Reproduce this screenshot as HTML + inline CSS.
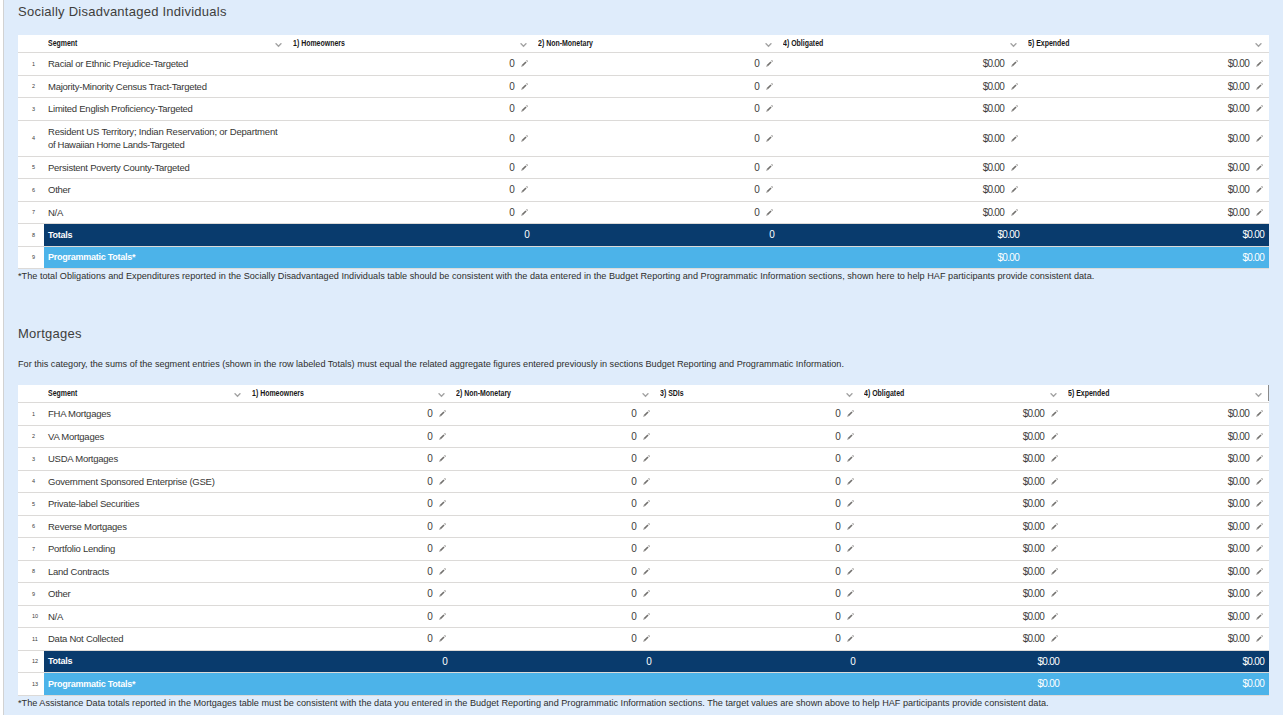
<!DOCTYPE html>
<html><head><meta charset="utf-8"><style>
html,body{margin:0;padding:0;width:1283px;height:715px;overflow:hidden;background:#fff;font-family:"Liberation Sans",sans-serif;}
.panel{position:absolute;left:3px;top:0;width:1280px;height:715px;background:#dfecfb;border-left:1px solid #d2d2d2;box-sizing:border-box}
.tb{position:absolute;background:#fff}
.ln{position:absolute;height:1px;background:#dcdad8}
.hd{position:absolute;font-weight:bold;font-size:8.3px;letter-spacing:0px;color:#181818;white-space:nowrap;transform:scaleX(0.84);transform-origin:0 0}
.cvw,.pw{position:absolute;line-height:0}
.cv,.pc{display:block}
.rn{position:absolute;font-size:5.5px;color:#3a3a3a;white-space:nowrap}
.tx{position:absolute;font-size:9.5px;letter-spacing:-0.25px;color:#363634;white-space:nowrap}
.tx2{position:absolute;font-size:9.5px;letter-spacing:-0.3px;color:#363634;white-space:nowrap;line-height:13px;padding-top:4px;box-sizing:border-box}
.vl{position:absolute;font-size:10px;letter-spacing:-0.75px;color:#3e3e3c;white-space:nowrap}
.tt{position:absolute;font-size:9px;font-weight:bold;letter-spacing:-0.25px;color:#fff;white-space:nowrap}
.tv{position:absolute;font-size:10px;letter-spacing:-0.7px;color:#fff;white-space:nowrap}
.pv{position:absolute;font-size:10px;letter-spacing:-0.7px;color:#fff;white-space:nowrap}
.ttl{position:absolute;font-size:13px;letter-spacing:0.25px;color:#3e3e3c;white-space:nowrap}
.note{position:absolute;font-size:9.15px;color:#2e2e2c;white-space:nowrap}
</style></head><body>
<div class="panel"></div>

<div class="ttl" style="left:18px;top:4px">Socially Disadvantaged Individuals</div>
<div class="tb" style="left:18px;top:35px;width:1251px;height:233px"></div>
<div class="ln" style="left:18px;top:52px;width:1251px"></div>
<div class="hd" style="left:48px;top:35px;height:17px;line-height:17px">Segment</div>
<div class="cvw" style="left:275px;top:43px"><svg class="cv" width="7" height="5" viewBox="0 0 7 5"><path d="M0.6 0.3 L3.5 3.2 L6.4 0.3" fill="none" stroke="#a2a2a2" stroke-width="1.35"/></svg></div>
<div class="hd" style="left:293px;top:35px;height:17px;line-height:17px">1) Homeowners</div>
<div class="cvw" style="left:520px;top:43px"><svg class="cv" width="7" height="5" viewBox="0 0 7 5"><path d="M0.6 0.3 L3.5 3.2 L6.4 0.3" fill="none" stroke="#a2a2a2" stroke-width="1.35"/></svg></div>
<div class="hd" style="left:538px;top:35px;height:17px;line-height:17px">2) Non-Monetary</div>
<div class="cvw" style="left:765px;top:43px"><svg class="cv" width="7" height="5" viewBox="0 0 7 5"><path d="M0.6 0.3 L3.5 3.2 L6.4 0.3" fill="none" stroke="#a2a2a2" stroke-width="1.35"/></svg></div>
<div class="hd" style="left:783px;top:35px;height:17px;line-height:17px">4) Obligated</div>
<div class="cvw" style="left:1010px;top:43px"><svg class="cv" width="7" height="5" viewBox="0 0 7 5"><path d="M0.6 0.3 L3.5 3.2 L6.4 0.3" fill="none" stroke="#a2a2a2" stroke-width="1.35"/></svg></div>
<div class="hd" style="left:1028px;top:35px;height:17px;line-height:17px">5) Expended</div>
<div class="cvw" style="left:1255px;top:43px"><svg class="cv" width="7" height="5" viewBox="0 0 7 5"><path d="M0.6 0.3 L3.5 3.2 L6.4 0.3" fill="none" stroke="#a2a2a2" stroke-width="1.35"/></svg></div>
<div class="ln" style="left:18px;top:75px;width:1251px"></div>
<div class="rn" style="left:32px;top:53px;height:22px;line-height:22px">1</div>
<div class="tx" style="left:48px;top:53px;height:22px;line-height:22px">Racial or Ethnic Prejudice-Targeted</div>
<div class="vl" style="right:769px;top:53px;height:22px;line-height:22px">0</div>
<div class="pw" style="left:521px;top:60px"><svg class="pc" width="7" height="7" viewBox="0 0 7 7"><path d="M0.1 6.9 L0.75 5.1 L1.9 6.25 Z" fill="#a3a19f"/><path d="M0.75 5.1 L4.45 1.4 L5.6 2.55 L1.9 6.25 Z" fill="#72706e"/><path d="M5.05 0.8 L5.9 -0.05 L7.05 1.1 L6.2 1.95 Z" fill="#9c9a98"/></svg></div>
<div class="vl" style="right:524px;top:53px;height:22px;line-height:22px">0</div>
<div class="pw" style="left:766px;top:60px"><svg class="pc" width="7" height="7" viewBox="0 0 7 7"><path d="M0.1 6.9 L0.75 5.1 L1.9 6.25 Z" fill="#a3a19f"/><path d="M0.75 5.1 L4.45 1.4 L5.6 2.55 L1.9 6.25 Z" fill="#72706e"/><path d="M5.05 0.8 L5.9 -0.05 L7.05 1.1 L6.2 1.95 Z" fill="#9c9a98"/></svg></div>
<div class="vl" style="right:279px;top:53px;height:22px;line-height:22px">$0.00</div>
<div class="pw" style="left:1011px;top:60px"><svg class="pc" width="7" height="7" viewBox="0 0 7 7"><path d="M0.1 6.9 L0.75 5.1 L1.9 6.25 Z" fill="#a3a19f"/><path d="M0.75 5.1 L4.45 1.4 L5.6 2.55 L1.9 6.25 Z" fill="#72706e"/><path d="M5.05 0.8 L5.9 -0.05 L7.05 1.1 L6.2 1.95 Z" fill="#9c9a98"/></svg></div>
<div class="vl" style="right:34px;top:53px;height:22px;line-height:22px">$0.00</div>
<div class="pw" style="left:1256px;top:60px"><svg class="pc" width="7" height="7" viewBox="0 0 7 7"><path d="M0.1 6.9 L0.75 5.1 L1.9 6.25 Z" fill="#a3a19f"/><path d="M0.75 5.1 L4.45 1.4 L5.6 2.55 L1.9 6.25 Z" fill="#72706e"/><path d="M5.05 0.8 L5.9 -0.05 L7.05 1.1 L6.2 1.95 Z" fill="#9c9a98"/></svg></div>
<div class="ln" style="left:18px;top:97px;width:1251px"></div>
<div class="rn" style="left:32px;top:76px;height:21px;line-height:21px">2</div>
<div class="tx" style="left:48px;top:76px;height:21px;line-height:21px">Majority-Minority Census Tract-Targeted</div>
<div class="vl" style="right:769px;top:76px;height:21px;line-height:21px">0</div>
<div class="pw" style="left:521px;top:83px"><svg class="pc" width="7" height="7" viewBox="0 0 7 7"><path d="M0.1 6.9 L0.75 5.1 L1.9 6.25 Z" fill="#a3a19f"/><path d="M0.75 5.1 L4.45 1.4 L5.6 2.55 L1.9 6.25 Z" fill="#72706e"/><path d="M5.05 0.8 L5.9 -0.05 L7.05 1.1 L6.2 1.95 Z" fill="#9c9a98"/></svg></div>
<div class="vl" style="right:524px;top:76px;height:21px;line-height:21px">0</div>
<div class="pw" style="left:766px;top:83px"><svg class="pc" width="7" height="7" viewBox="0 0 7 7"><path d="M0.1 6.9 L0.75 5.1 L1.9 6.25 Z" fill="#a3a19f"/><path d="M0.75 5.1 L4.45 1.4 L5.6 2.55 L1.9 6.25 Z" fill="#72706e"/><path d="M5.05 0.8 L5.9 -0.05 L7.05 1.1 L6.2 1.95 Z" fill="#9c9a98"/></svg></div>
<div class="vl" style="right:279px;top:76px;height:21px;line-height:21px">$0.00</div>
<div class="pw" style="left:1011px;top:83px"><svg class="pc" width="7" height="7" viewBox="0 0 7 7"><path d="M0.1 6.9 L0.75 5.1 L1.9 6.25 Z" fill="#a3a19f"/><path d="M0.75 5.1 L4.45 1.4 L5.6 2.55 L1.9 6.25 Z" fill="#72706e"/><path d="M5.05 0.8 L5.9 -0.05 L7.05 1.1 L6.2 1.95 Z" fill="#9c9a98"/></svg></div>
<div class="vl" style="right:34px;top:76px;height:21px;line-height:21px">$0.00</div>
<div class="pw" style="left:1256px;top:83px"><svg class="pc" width="7" height="7" viewBox="0 0 7 7"><path d="M0.1 6.9 L0.75 5.1 L1.9 6.25 Z" fill="#a3a19f"/><path d="M0.75 5.1 L4.45 1.4 L5.6 2.55 L1.9 6.25 Z" fill="#72706e"/><path d="M5.05 0.8 L5.9 -0.05 L7.05 1.1 L6.2 1.95 Z" fill="#9c9a98"/></svg></div>
<div class="ln" style="left:18px;top:120px;width:1251px"></div>
<div class="rn" style="left:32px;top:98px;height:22px;line-height:22px">3</div>
<div class="tx" style="left:48px;top:98px;height:22px;line-height:22px">Limited English Proficiency-Targeted</div>
<div class="vl" style="right:769px;top:98px;height:22px;line-height:22px">0</div>
<div class="pw" style="left:521px;top:105px"><svg class="pc" width="7" height="7" viewBox="0 0 7 7"><path d="M0.1 6.9 L0.75 5.1 L1.9 6.25 Z" fill="#a3a19f"/><path d="M0.75 5.1 L4.45 1.4 L5.6 2.55 L1.9 6.25 Z" fill="#72706e"/><path d="M5.05 0.8 L5.9 -0.05 L7.05 1.1 L6.2 1.95 Z" fill="#9c9a98"/></svg></div>
<div class="vl" style="right:524px;top:98px;height:22px;line-height:22px">0</div>
<div class="pw" style="left:766px;top:105px"><svg class="pc" width="7" height="7" viewBox="0 0 7 7"><path d="M0.1 6.9 L0.75 5.1 L1.9 6.25 Z" fill="#a3a19f"/><path d="M0.75 5.1 L4.45 1.4 L5.6 2.55 L1.9 6.25 Z" fill="#72706e"/><path d="M5.05 0.8 L5.9 -0.05 L7.05 1.1 L6.2 1.95 Z" fill="#9c9a98"/></svg></div>
<div class="vl" style="right:279px;top:98px;height:22px;line-height:22px">$0.00</div>
<div class="pw" style="left:1011px;top:105px"><svg class="pc" width="7" height="7" viewBox="0 0 7 7"><path d="M0.1 6.9 L0.75 5.1 L1.9 6.25 Z" fill="#a3a19f"/><path d="M0.75 5.1 L4.45 1.4 L5.6 2.55 L1.9 6.25 Z" fill="#72706e"/><path d="M5.05 0.8 L5.9 -0.05 L7.05 1.1 L6.2 1.95 Z" fill="#9c9a98"/></svg></div>
<div class="vl" style="right:34px;top:98px;height:22px;line-height:22px">$0.00</div>
<div class="pw" style="left:1256px;top:105px"><svg class="pc" width="7" height="7" viewBox="0 0 7 7"><path d="M0.1 6.9 L0.75 5.1 L1.9 6.25 Z" fill="#a3a19f"/><path d="M0.75 5.1 L4.45 1.4 L5.6 2.55 L1.9 6.25 Z" fill="#72706e"/><path d="M5.05 0.8 L5.9 -0.05 L7.05 1.1 L6.2 1.95 Z" fill="#9c9a98"/></svg></div>
<div class="ln" style="left:18px;top:156px;width:1251px"></div>
<div class="rn" style="left:32px;top:121px;height:35px;line-height:35px">4</div>
<div class="tx2" style="left:48px;top:121px;height:35px"><span style="letter-spacing:-0.2px">Resident US Territory; Indian Reservation; or Department</span><br><span style="letter-spacing:-0.32px">of Hawaiian Home Lands-Targeted</span></div>
<div class="vl" style="right:769px;top:121px;height:35px;line-height:35px">0</div>
<div class="pw" style="left:521px;top:135px"><svg class="pc" width="7" height="7" viewBox="0 0 7 7"><path d="M0.1 6.9 L0.75 5.1 L1.9 6.25 Z" fill="#a3a19f"/><path d="M0.75 5.1 L4.45 1.4 L5.6 2.55 L1.9 6.25 Z" fill="#72706e"/><path d="M5.05 0.8 L5.9 -0.05 L7.05 1.1 L6.2 1.95 Z" fill="#9c9a98"/></svg></div>
<div class="vl" style="right:524px;top:121px;height:35px;line-height:35px">0</div>
<div class="pw" style="left:766px;top:135px"><svg class="pc" width="7" height="7" viewBox="0 0 7 7"><path d="M0.1 6.9 L0.75 5.1 L1.9 6.25 Z" fill="#a3a19f"/><path d="M0.75 5.1 L4.45 1.4 L5.6 2.55 L1.9 6.25 Z" fill="#72706e"/><path d="M5.05 0.8 L5.9 -0.05 L7.05 1.1 L6.2 1.95 Z" fill="#9c9a98"/></svg></div>
<div class="vl" style="right:279px;top:121px;height:35px;line-height:35px">$0.00</div>
<div class="pw" style="left:1011px;top:135px"><svg class="pc" width="7" height="7" viewBox="0 0 7 7"><path d="M0.1 6.9 L0.75 5.1 L1.9 6.25 Z" fill="#a3a19f"/><path d="M0.75 5.1 L4.45 1.4 L5.6 2.55 L1.9 6.25 Z" fill="#72706e"/><path d="M5.05 0.8 L5.9 -0.05 L7.05 1.1 L6.2 1.95 Z" fill="#9c9a98"/></svg></div>
<div class="vl" style="right:34px;top:121px;height:35px;line-height:35px">$0.00</div>
<div class="pw" style="left:1256px;top:135px"><svg class="pc" width="7" height="7" viewBox="0 0 7 7"><path d="M0.1 6.9 L0.75 5.1 L1.9 6.25 Z" fill="#a3a19f"/><path d="M0.75 5.1 L4.45 1.4 L5.6 2.55 L1.9 6.25 Z" fill="#72706e"/><path d="M5.05 0.8 L5.9 -0.05 L7.05 1.1 L6.2 1.95 Z" fill="#9c9a98"/></svg></div>
<div class="ln" style="left:18px;top:178px;width:1251px"></div>
<div class="rn" style="left:32px;top:157px;height:21px;line-height:21px">5</div>
<div class="tx" style="left:48px;top:157px;height:21px;line-height:21px">Persistent Poverty County-Targeted</div>
<div class="vl" style="right:769px;top:157px;height:21px;line-height:21px">0</div>
<div class="pw" style="left:521px;top:164px"><svg class="pc" width="7" height="7" viewBox="0 0 7 7"><path d="M0.1 6.9 L0.75 5.1 L1.9 6.25 Z" fill="#a3a19f"/><path d="M0.75 5.1 L4.45 1.4 L5.6 2.55 L1.9 6.25 Z" fill="#72706e"/><path d="M5.05 0.8 L5.9 -0.05 L7.05 1.1 L6.2 1.95 Z" fill="#9c9a98"/></svg></div>
<div class="vl" style="right:524px;top:157px;height:21px;line-height:21px">0</div>
<div class="pw" style="left:766px;top:164px"><svg class="pc" width="7" height="7" viewBox="0 0 7 7"><path d="M0.1 6.9 L0.75 5.1 L1.9 6.25 Z" fill="#a3a19f"/><path d="M0.75 5.1 L4.45 1.4 L5.6 2.55 L1.9 6.25 Z" fill="#72706e"/><path d="M5.05 0.8 L5.9 -0.05 L7.05 1.1 L6.2 1.95 Z" fill="#9c9a98"/></svg></div>
<div class="vl" style="right:279px;top:157px;height:21px;line-height:21px">$0.00</div>
<div class="pw" style="left:1011px;top:164px"><svg class="pc" width="7" height="7" viewBox="0 0 7 7"><path d="M0.1 6.9 L0.75 5.1 L1.9 6.25 Z" fill="#a3a19f"/><path d="M0.75 5.1 L4.45 1.4 L5.6 2.55 L1.9 6.25 Z" fill="#72706e"/><path d="M5.05 0.8 L5.9 -0.05 L7.05 1.1 L6.2 1.95 Z" fill="#9c9a98"/></svg></div>
<div class="vl" style="right:34px;top:157px;height:21px;line-height:21px">$0.00</div>
<div class="pw" style="left:1256px;top:164px"><svg class="pc" width="7" height="7" viewBox="0 0 7 7"><path d="M0.1 6.9 L0.75 5.1 L1.9 6.25 Z" fill="#a3a19f"/><path d="M0.75 5.1 L4.45 1.4 L5.6 2.55 L1.9 6.25 Z" fill="#72706e"/><path d="M5.05 0.8 L5.9 -0.05 L7.05 1.1 L6.2 1.95 Z" fill="#9c9a98"/></svg></div>
<div class="ln" style="left:18px;top:201px;width:1251px"></div>
<div class="rn" style="left:32px;top:179px;height:22px;line-height:22px">6</div>
<div class="tx" style="left:48px;top:179px;height:22px;line-height:22px">Other</div>
<div class="vl" style="right:769px;top:179px;height:22px;line-height:22px">0</div>
<div class="pw" style="left:521px;top:186px"><svg class="pc" width="7" height="7" viewBox="0 0 7 7"><path d="M0.1 6.9 L0.75 5.1 L1.9 6.25 Z" fill="#a3a19f"/><path d="M0.75 5.1 L4.45 1.4 L5.6 2.55 L1.9 6.25 Z" fill="#72706e"/><path d="M5.05 0.8 L5.9 -0.05 L7.05 1.1 L6.2 1.95 Z" fill="#9c9a98"/></svg></div>
<div class="vl" style="right:524px;top:179px;height:22px;line-height:22px">0</div>
<div class="pw" style="left:766px;top:186px"><svg class="pc" width="7" height="7" viewBox="0 0 7 7"><path d="M0.1 6.9 L0.75 5.1 L1.9 6.25 Z" fill="#a3a19f"/><path d="M0.75 5.1 L4.45 1.4 L5.6 2.55 L1.9 6.25 Z" fill="#72706e"/><path d="M5.05 0.8 L5.9 -0.05 L7.05 1.1 L6.2 1.95 Z" fill="#9c9a98"/></svg></div>
<div class="vl" style="right:279px;top:179px;height:22px;line-height:22px">$0.00</div>
<div class="pw" style="left:1011px;top:186px"><svg class="pc" width="7" height="7" viewBox="0 0 7 7"><path d="M0.1 6.9 L0.75 5.1 L1.9 6.25 Z" fill="#a3a19f"/><path d="M0.75 5.1 L4.45 1.4 L5.6 2.55 L1.9 6.25 Z" fill="#72706e"/><path d="M5.05 0.8 L5.9 -0.05 L7.05 1.1 L6.2 1.95 Z" fill="#9c9a98"/></svg></div>
<div class="vl" style="right:34px;top:179px;height:22px;line-height:22px">$0.00</div>
<div class="pw" style="left:1256px;top:186px"><svg class="pc" width="7" height="7" viewBox="0 0 7 7"><path d="M0.1 6.9 L0.75 5.1 L1.9 6.25 Z" fill="#a3a19f"/><path d="M0.75 5.1 L4.45 1.4 L5.6 2.55 L1.9 6.25 Z" fill="#72706e"/><path d="M5.05 0.8 L5.9 -0.05 L7.05 1.1 L6.2 1.95 Z" fill="#9c9a98"/></svg></div>
<div class="ln" style="left:18px;top:223px;width:1251px"></div>
<div class="rn" style="left:32px;top:202px;height:21px;line-height:21px">7</div>
<div class="tx" style="left:48px;top:202px;height:21px;line-height:21px">N/A</div>
<div class="vl" style="right:769px;top:202px;height:21px;line-height:21px">0</div>
<div class="pw" style="left:521px;top:209px"><svg class="pc" width="7" height="7" viewBox="0 0 7 7"><path d="M0.1 6.9 L0.75 5.1 L1.9 6.25 Z" fill="#a3a19f"/><path d="M0.75 5.1 L4.45 1.4 L5.6 2.55 L1.9 6.25 Z" fill="#72706e"/><path d="M5.05 0.8 L5.9 -0.05 L7.05 1.1 L6.2 1.95 Z" fill="#9c9a98"/></svg></div>
<div class="vl" style="right:524px;top:202px;height:21px;line-height:21px">0</div>
<div class="pw" style="left:766px;top:209px"><svg class="pc" width="7" height="7" viewBox="0 0 7 7"><path d="M0.1 6.9 L0.75 5.1 L1.9 6.25 Z" fill="#a3a19f"/><path d="M0.75 5.1 L4.45 1.4 L5.6 2.55 L1.9 6.25 Z" fill="#72706e"/><path d="M5.05 0.8 L5.9 -0.05 L7.05 1.1 L6.2 1.95 Z" fill="#9c9a98"/></svg></div>
<div class="vl" style="right:279px;top:202px;height:21px;line-height:21px">$0.00</div>
<div class="pw" style="left:1011px;top:209px"><svg class="pc" width="7" height="7" viewBox="0 0 7 7"><path d="M0.1 6.9 L0.75 5.1 L1.9 6.25 Z" fill="#a3a19f"/><path d="M0.75 5.1 L4.45 1.4 L5.6 2.55 L1.9 6.25 Z" fill="#72706e"/><path d="M5.05 0.8 L5.9 -0.05 L7.05 1.1 L6.2 1.95 Z" fill="#9c9a98"/></svg></div>
<div class="vl" style="right:34px;top:202px;height:21px;line-height:21px">$0.00</div>
<div class="pw" style="left:1256px;top:209px"><svg class="pc" width="7" height="7" viewBox="0 0 7 7"><path d="M0.1 6.9 L0.75 5.1 L1.9 6.25 Z" fill="#a3a19f"/><path d="M0.75 5.1 L4.45 1.4 L5.6 2.55 L1.9 6.25 Z" fill="#72706e"/><path d="M5.05 0.8 L5.9 -0.05 L7.05 1.1 L6.2 1.95 Z" fill="#9c9a98"/></svg></div>
<div class="ln" style="left:18px;top:246px;width:1251px"></div>
<div class="rn" style="left:32px;top:224px;height:22px;line-height:22px">8</div>
<div style="position:absolute;left:44px;top:224px;width:1225px;height:22px;background:#093b6d"></div>
<div class="tt" style="left:48px;top:224px;height:22px;line-height:22px">Totals</div>
<div class="tv" style="right:754px;top:224px;height:22px;line-height:22px">0</div>
<div class="tv" style="right:509px;top:224px;height:22px;line-height:22px">0</div>
<div class="tv" style="right:264px;top:224px;height:22px;line-height:22px">$0.00</div>
<div class="tv" style="right:19px;top:224px;height:22px;line-height:22px">$0.00</div>
<div class="ln" style="left:18px;top:268px;width:1251px"></div>
<div class="rn" style="left:32px;top:247px;height:21px;line-height:21px">9</div>
<div style="position:absolute;left:44px;top:247px;width:1225px;height:21px;background:#4cb3e9"></div>
<div class="tt" style="left:48px;top:247px;height:21px;line-height:21px">Programmatic Totals*</div>
<div class="pv" style="right:264px;top:247px;height:21px;line-height:21px">$0.00</div>
<div class="pv" style="right:19px;top:247px;height:21px;line-height:21px">$0.00</div>
<div class="note" style="left:18px;top:271px;letter-spacing:0.017px">*The total Obligations and Expenditures reported in the Socially Disadvantaged Individuals table should be consistent with the data entered in the Budget Reporting and Programmatic Information sections, shown here to help HAF participants provide consistent data.</div>
<div class="ttl" style="left:18px;top:326px">Mortgages</div>
<div class="note" style="left:18px;top:359px;letter-spacing:-0.01px">For this category, the sums of the segment entries (shown in the row labeled Totals) must equal the related aggregate figures entered previously in sections Budget Reporting and Programmatic Information.</div>
<div class="tb" style="left:18px;top:385px;width:1251px;height:310px"></div>
<div class="ln" style="left:18px;top:402px;width:1251px"></div>
<div class="hd" style="left:48px;top:385px;height:17px;line-height:17px">Segment</div>
<div class="cvw" style="left:234px;top:393px"><svg class="cv" width="7" height="5" viewBox="0 0 7 5"><path d="M0.6 0.3 L3.5 3.2 L6.4 0.3" fill="none" stroke="#a2a2a2" stroke-width="1.35"/></svg></div>
<div class="hd" style="left:252px;top:385px;height:17px;line-height:17px">1) Homeowners</div>
<div class="cvw" style="left:438px;top:393px"><svg class="cv" width="7" height="5" viewBox="0 0 7 5"><path d="M0.6 0.3 L3.5 3.2 L6.4 0.3" fill="none" stroke="#a2a2a2" stroke-width="1.35"/></svg></div>
<div class="hd" style="left:456px;top:385px;height:17px;line-height:17px">2) Non-Monetary</div>
<div class="cvw" style="left:642px;top:393px"><svg class="cv" width="7" height="5" viewBox="0 0 7 5"><path d="M0.6 0.3 L3.5 3.2 L6.4 0.3" fill="none" stroke="#a2a2a2" stroke-width="1.35"/></svg></div>
<div class="hd" style="left:660px;top:385px;height:17px;line-height:17px">3) SDIs</div>
<div class="cvw" style="left:846px;top:393px"><svg class="cv" width="7" height="5" viewBox="0 0 7 5"><path d="M0.6 0.3 L3.5 3.2 L6.4 0.3" fill="none" stroke="#a2a2a2" stroke-width="1.35"/></svg></div>
<div class="hd" style="left:864px;top:385px;height:17px;line-height:17px">4) Obligated</div>
<div class="cvw" style="left:1050px;top:393px"><svg class="cv" width="7" height="5" viewBox="0 0 7 5"><path d="M0.6 0.3 L3.5 3.2 L6.4 0.3" fill="none" stroke="#a2a2a2" stroke-width="1.35"/></svg></div>
<div class="hd" style="left:1068px;top:385px;height:17px;line-height:17px">5) Expended</div>
<div class="cvw" style="left:1255px;top:393px"><svg class="cv" width="7" height="5" viewBox="0 0 7 5"><path d="M0.6 0.3 L3.5 3.2 L6.4 0.3" fill="none" stroke="#a2a2a2" stroke-width="1.35"/></svg></div>
<div style="position:absolute;left:1268px;top:385px;width:1px;height:16px;background:#8a8a8a"></div>
<div class="ln" style="left:18px;top:425px;width:1251px"></div>
<div class="rn" style="left:32px;top:403px;height:22px;line-height:22px">1</div>
<div class="tx" style="left:48px;top:403px;height:22px;line-height:22px">FHA Mortgages</div>
<div class="vl" style="right:851px;top:403px;height:22px;line-height:22px">0</div>
<div class="pw" style="left:439px;top:410px"><svg class="pc" width="7" height="7" viewBox="0 0 7 7"><path d="M0.1 6.9 L0.75 5.1 L1.9 6.25 Z" fill="#a3a19f"/><path d="M0.75 5.1 L4.45 1.4 L5.6 2.55 L1.9 6.25 Z" fill="#72706e"/><path d="M5.05 0.8 L5.9 -0.05 L7.05 1.1 L6.2 1.95 Z" fill="#9c9a98"/></svg></div>
<div class="vl" style="right:647px;top:403px;height:22px;line-height:22px">0</div>
<div class="pw" style="left:643px;top:410px"><svg class="pc" width="7" height="7" viewBox="0 0 7 7"><path d="M0.1 6.9 L0.75 5.1 L1.9 6.25 Z" fill="#a3a19f"/><path d="M0.75 5.1 L4.45 1.4 L5.6 2.55 L1.9 6.25 Z" fill="#72706e"/><path d="M5.05 0.8 L5.9 -0.05 L7.05 1.1 L6.2 1.95 Z" fill="#9c9a98"/></svg></div>
<div class="vl" style="right:443px;top:403px;height:22px;line-height:22px">0</div>
<div class="pw" style="left:847px;top:410px"><svg class="pc" width="7" height="7" viewBox="0 0 7 7"><path d="M0.1 6.9 L0.75 5.1 L1.9 6.25 Z" fill="#a3a19f"/><path d="M0.75 5.1 L4.45 1.4 L5.6 2.55 L1.9 6.25 Z" fill="#72706e"/><path d="M5.05 0.8 L5.9 -0.05 L7.05 1.1 L6.2 1.95 Z" fill="#9c9a98"/></svg></div>
<div class="vl" style="right:239px;top:403px;height:22px;line-height:22px">$0.00</div>
<div class="pw" style="left:1051px;top:410px"><svg class="pc" width="7" height="7" viewBox="0 0 7 7"><path d="M0.1 6.9 L0.75 5.1 L1.9 6.25 Z" fill="#a3a19f"/><path d="M0.75 5.1 L4.45 1.4 L5.6 2.55 L1.9 6.25 Z" fill="#72706e"/><path d="M5.05 0.8 L5.9 -0.05 L7.05 1.1 L6.2 1.95 Z" fill="#9c9a98"/></svg></div>
<div class="vl" style="right:34px;top:403px;height:22px;line-height:22px">$0.00</div>
<div class="pw" style="left:1256px;top:410px"><svg class="pc" width="7" height="7" viewBox="0 0 7 7"><path d="M0.1 6.9 L0.75 5.1 L1.9 6.25 Z" fill="#a3a19f"/><path d="M0.75 5.1 L4.45 1.4 L5.6 2.55 L1.9 6.25 Z" fill="#72706e"/><path d="M5.05 0.8 L5.9 -0.05 L7.05 1.1 L6.2 1.95 Z" fill="#9c9a98"/></svg></div>
<div class="ln" style="left:18px;top:447px;width:1251px"></div>
<div class="rn" style="left:32px;top:426px;height:21px;line-height:21px">2</div>
<div class="tx" style="left:48px;top:426px;height:21px;line-height:21px">VA Mortgages</div>
<div class="vl" style="right:851px;top:426px;height:21px;line-height:21px">0</div>
<div class="pw" style="left:439px;top:433px"><svg class="pc" width="7" height="7" viewBox="0 0 7 7"><path d="M0.1 6.9 L0.75 5.1 L1.9 6.25 Z" fill="#a3a19f"/><path d="M0.75 5.1 L4.45 1.4 L5.6 2.55 L1.9 6.25 Z" fill="#72706e"/><path d="M5.05 0.8 L5.9 -0.05 L7.05 1.1 L6.2 1.95 Z" fill="#9c9a98"/></svg></div>
<div class="vl" style="right:647px;top:426px;height:21px;line-height:21px">0</div>
<div class="pw" style="left:643px;top:433px"><svg class="pc" width="7" height="7" viewBox="0 0 7 7"><path d="M0.1 6.9 L0.75 5.1 L1.9 6.25 Z" fill="#a3a19f"/><path d="M0.75 5.1 L4.45 1.4 L5.6 2.55 L1.9 6.25 Z" fill="#72706e"/><path d="M5.05 0.8 L5.9 -0.05 L7.05 1.1 L6.2 1.95 Z" fill="#9c9a98"/></svg></div>
<div class="vl" style="right:443px;top:426px;height:21px;line-height:21px">0</div>
<div class="pw" style="left:847px;top:433px"><svg class="pc" width="7" height="7" viewBox="0 0 7 7"><path d="M0.1 6.9 L0.75 5.1 L1.9 6.25 Z" fill="#a3a19f"/><path d="M0.75 5.1 L4.45 1.4 L5.6 2.55 L1.9 6.25 Z" fill="#72706e"/><path d="M5.05 0.8 L5.9 -0.05 L7.05 1.1 L6.2 1.95 Z" fill="#9c9a98"/></svg></div>
<div class="vl" style="right:239px;top:426px;height:21px;line-height:21px">$0.00</div>
<div class="pw" style="left:1051px;top:433px"><svg class="pc" width="7" height="7" viewBox="0 0 7 7"><path d="M0.1 6.9 L0.75 5.1 L1.9 6.25 Z" fill="#a3a19f"/><path d="M0.75 5.1 L4.45 1.4 L5.6 2.55 L1.9 6.25 Z" fill="#72706e"/><path d="M5.05 0.8 L5.9 -0.05 L7.05 1.1 L6.2 1.95 Z" fill="#9c9a98"/></svg></div>
<div class="vl" style="right:34px;top:426px;height:21px;line-height:21px">$0.00</div>
<div class="pw" style="left:1256px;top:433px"><svg class="pc" width="7" height="7" viewBox="0 0 7 7"><path d="M0.1 6.9 L0.75 5.1 L1.9 6.25 Z" fill="#a3a19f"/><path d="M0.75 5.1 L4.45 1.4 L5.6 2.55 L1.9 6.25 Z" fill="#72706e"/><path d="M5.05 0.8 L5.9 -0.05 L7.05 1.1 L6.2 1.95 Z" fill="#9c9a98"/></svg></div>
<div class="ln" style="left:18px;top:470px;width:1251px"></div>
<div class="rn" style="left:32px;top:448px;height:22px;line-height:22px">3</div>
<div class="tx" style="left:48px;top:448px;height:22px;line-height:22px">USDA Mortgages</div>
<div class="vl" style="right:851px;top:448px;height:22px;line-height:22px">0</div>
<div class="pw" style="left:439px;top:455px"><svg class="pc" width="7" height="7" viewBox="0 0 7 7"><path d="M0.1 6.9 L0.75 5.1 L1.9 6.25 Z" fill="#a3a19f"/><path d="M0.75 5.1 L4.45 1.4 L5.6 2.55 L1.9 6.25 Z" fill="#72706e"/><path d="M5.05 0.8 L5.9 -0.05 L7.05 1.1 L6.2 1.95 Z" fill="#9c9a98"/></svg></div>
<div class="vl" style="right:647px;top:448px;height:22px;line-height:22px">0</div>
<div class="pw" style="left:643px;top:455px"><svg class="pc" width="7" height="7" viewBox="0 0 7 7"><path d="M0.1 6.9 L0.75 5.1 L1.9 6.25 Z" fill="#a3a19f"/><path d="M0.75 5.1 L4.45 1.4 L5.6 2.55 L1.9 6.25 Z" fill="#72706e"/><path d="M5.05 0.8 L5.9 -0.05 L7.05 1.1 L6.2 1.95 Z" fill="#9c9a98"/></svg></div>
<div class="vl" style="right:443px;top:448px;height:22px;line-height:22px">0</div>
<div class="pw" style="left:847px;top:455px"><svg class="pc" width="7" height="7" viewBox="0 0 7 7"><path d="M0.1 6.9 L0.75 5.1 L1.9 6.25 Z" fill="#a3a19f"/><path d="M0.75 5.1 L4.45 1.4 L5.6 2.55 L1.9 6.25 Z" fill="#72706e"/><path d="M5.05 0.8 L5.9 -0.05 L7.05 1.1 L6.2 1.95 Z" fill="#9c9a98"/></svg></div>
<div class="vl" style="right:239px;top:448px;height:22px;line-height:22px">$0.00</div>
<div class="pw" style="left:1051px;top:455px"><svg class="pc" width="7" height="7" viewBox="0 0 7 7"><path d="M0.1 6.9 L0.75 5.1 L1.9 6.25 Z" fill="#a3a19f"/><path d="M0.75 5.1 L4.45 1.4 L5.6 2.55 L1.9 6.25 Z" fill="#72706e"/><path d="M5.05 0.8 L5.9 -0.05 L7.05 1.1 L6.2 1.95 Z" fill="#9c9a98"/></svg></div>
<div class="vl" style="right:34px;top:448px;height:22px;line-height:22px">$0.00</div>
<div class="pw" style="left:1256px;top:455px"><svg class="pc" width="7" height="7" viewBox="0 0 7 7"><path d="M0.1 6.9 L0.75 5.1 L1.9 6.25 Z" fill="#a3a19f"/><path d="M0.75 5.1 L4.45 1.4 L5.6 2.55 L1.9 6.25 Z" fill="#72706e"/><path d="M5.05 0.8 L5.9 -0.05 L7.05 1.1 L6.2 1.95 Z" fill="#9c9a98"/></svg></div>
<div class="ln" style="left:18px;top:492px;width:1251px"></div>
<div class="rn" style="left:32px;top:471px;height:21px;line-height:21px">4</div>
<div class="tx" style="left:48px;top:471px;height:21px;line-height:21px">Government Sponsored Enterprise (GSE)</div>
<div class="vl" style="right:851px;top:471px;height:21px;line-height:21px">0</div>
<div class="pw" style="left:439px;top:478px"><svg class="pc" width="7" height="7" viewBox="0 0 7 7"><path d="M0.1 6.9 L0.75 5.1 L1.9 6.25 Z" fill="#a3a19f"/><path d="M0.75 5.1 L4.45 1.4 L5.6 2.55 L1.9 6.25 Z" fill="#72706e"/><path d="M5.05 0.8 L5.9 -0.05 L7.05 1.1 L6.2 1.95 Z" fill="#9c9a98"/></svg></div>
<div class="vl" style="right:647px;top:471px;height:21px;line-height:21px">0</div>
<div class="pw" style="left:643px;top:478px"><svg class="pc" width="7" height="7" viewBox="0 0 7 7"><path d="M0.1 6.9 L0.75 5.1 L1.9 6.25 Z" fill="#a3a19f"/><path d="M0.75 5.1 L4.45 1.4 L5.6 2.55 L1.9 6.25 Z" fill="#72706e"/><path d="M5.05 0.8 L5.9 -0.05 L7.05 1.1 L6.2 1.95 Z" fill="#9c9a98"/></svg></div>
<div class="vl" style="right:443px;top:471px;height:21px;line-height:21px">0</div>
<div class="pw" style="left:847px;top:478px"><svg class="pc" width="7" height="7" viewBox="0 0 7 7"><path d="M0.1 6.9 L0.75 5.1 L1.9 6.25 Z" fill="#a3a19f"/><path d="M0.75 5.1 L4.45 1.4 L5.6 2.55 L1.9 6.25 Z" fill="#72706e"/><path d="M5.05 0.8 L5.9 -0.05 L7.05 1.1 L6.2 1.95 Z" fill="#9c9a98"/></svg></div>
<div class="vl" style="right:239px;top:471px;height:21px;line-height:21px">$0.00</div>
<div class="pw" style="left:1051px;top:478px"><svg class="pc" width="7" height="7" viewBox="0 0 7 7"><path d="M0.1 6.9 L0.75 5.1 L1.9 6.25 Z" fill="#a3a19f"/><path d="M0.75 5.1 L4.45 1.4 L5.6 2.55 L1.9 6.25 Z" fill="#72706e"/><path d="M5.05 0.8 L5.9 -0.05 L7.05 1.1 L6.2 1.95 Z" fill="#9c9a98"/></svg></div>
<div class="vl" style="right:34px;top:471px;height:21px;line-height:21px">$0.00</div>
<div class="pw" style="left:1256px;top:478px"><svg class="pc" width="7" height="7" viewBox="0 0 7 7"><path d="M0.1 6.9 L0.75 5.1 L1.9 6.25 Z" fill="#a3a19f"/><path d="M0.75 5.1 L4.45 1.4 L5.6 2.55 L1.9 6.25 Z" fill="#72706e"/><path d="M5.05 0.8 L5.9 -0.05 L7.05 1.1 L6.2 1.95 Z" fill="#9c9a98"/></svg></div>
<div class="ln" style="left:18px;top:515px;width:1251px"></div>
<div class="rn" style="left:32px;top:493px;height:22px;line-height:22px">5</div>
<div class="tx" style="left:48px;top:493px;height:22px;line-height:22px">Private-label Securities</div>
<div class="vl" style="right:851px;top:493px;height:22px;line-height:22px">0</div>
<div class="pw" style="left:439px;top:500px"><svg class="pc" width="7" height="7" viewBox="0 0 7 7"><path d="M0.1 6.9 L0.75 5.1 L1.9 6.25 Z" fill="#a3a19f"/><path d="M0.75 5.1 L4.45 1.4 L5.6 2.55 L1.9 6.25 Z" fill="#72706e"/><path d="M5.05 0.8 L5.9 -0.05 L7.05 1.1 L6.2 1.95 Z" fill="#9c9a98"/></svg></div>
<div class="vl" style="right:647px;top:493px;height:22px;line-height:22px">0</div>
<div class="pw" style="left:643px;top:500px"><svg class="pc" width="7" height="7" viewBox="0 0 7 7"><path d="M0.1 6.9 L0.75 5.1 L1.9 6.25 Z" fill="#a3a19f"/><path d="M0.75 5.1 L4.45 1.4 L5.6 2.55 L1.9 6.25 Z" fill="#72706e"/><path d="M5.05 0.8 L5.9 -0.05 L7.05 1.1 L6.2 1.95 Z" fill="#9c9a98"/></svg></div>
<div class="vl" style="right:443px;top:493px;height:22px;line-height:22px">0</div>
<div class="pw" style="left:847px;top:500px"><svg class="pc" width="7" height="7" viewBox="0 0 7 7"><path d="M0.1 6.9 L0.75 5.1 L1.9 6.25 Z" fill="#a3a19f"/><path d="M0.75 5.1 L4.45 1.4 L5.6 2.55 L1.9 6.25 Z" fill="#72706e"/><path d="M5.05 0.8 L5.9 -0.05 L7.05 1.1 L6.2 1.95 Z" fill="#9c9a98"/></svg></div>
<div class="vl" style="right:239px;top:493px;height:22px;line-height:22px">$0.00</div>
<div class="pw" style="left:1051px;top:500px"><svg class="pc" width="7" height="7" viewBox="0 0 7 7"><path d="M0.1 6.9 L0.75 5.1 L1.9 6.25 Z" fill="#a3a19f"/><path d="M0.75 5.1 L4.45 1.4 L5.6 2.55 L1.9 6.25 Z" fill="#72706e"/><path d="M5.05 0.8 L5.9 -0.05 L7.05 1.1 L6.2 1.95 Z" fill="#9c9a98"/></svg></div>
<div class="vl" style="right:34px;top:493px;height:22px;line-height:22px">$0.00</div>
<div class="pw" style="left:1256px;top:500px"><svg class="pc" width="7" height="7" viewBox="0 0 7 7"><path d="M0.1 6.9 L0.75 5.1 L1.9 6.25 Z" fill="#a3a19f"/><path d="M0.75 5.1 L4.45 1.4 L5.6 2.55 L1.9 6.25 Z" fill="#72706e"/><path d="M5.05 0.8 L5.9 -0.05 L7.05 1.1 L6.2 1.95 Z" fill="#9c9a98"/></svg></div>
<div class="ln" style="left:18px;top:537px;width:1251px"></div>
<div class="rn" style="left:32px;top:516px;height:21px;line-height:21px">6</div>
<div class="tx" style="left:48px;top:516px;height:21px;line-height:21px">Reverse Mortgages</div>
<div class="vl" style="right:851px;top:516px;height:21px;line-height:21px">0</div>
<div class="pw" style="left:439px;top:523px"><svg class="pc" width="7" height="7" viewBox="0 0 7 7"><path d="M0.1 6.9 L0.75 5.1 L1.9 6.25 Z" fill="#a3a19f"/><path d="M0.75 5.1 L4.45 1.4 L5.6 2.55 L1.9 6.25 Z" fill="#72706e"/><path d="M5.05 0.8 L5.9 -0.05 L7.05 1.1 L6.2 1.95 Z" fill="#9c9a98"/></svg></div>
<div class="vl" style="right:647px;top:516px;height:21px;line-height:21px">0</div>
<div class="pw" style="left:643px;top:523px"><svg class="pc" width="7" height="7" viewBox="0 0 7 7"><path d="M0.1 6.9 L0.75 5.1 L1.9 6.25 Z" fill="#a3a19f"/><path d="M0.75 5.1 L4.45 1.4 L5.6 2.55 L1.9 6.25 Z" fill="#72706e"/><path d="M5.05 0.8 L5.9 -0.05 L7.05 1.1 L6.2 1.95 Z" fill="#9c9a98"/></svg></div>
<div class="vl" style="right:443px;top:516px;height:21px;line-height:21px">0</div>
<div class="pw" style="left:847px;top:523px"><svg class="pc" width="7" height="7" viewBox="0 0 7 7"><path d="M0.1 6.9 L0.75 5.1 L1.9 6.25 Z" fill="#a3a19f"/><path d="M0.75 5.1 L4.45 1.4 L5.6 2.55 L1.9 6.25 Z" fill="#72706e"/><path d="M5.05 0.8 L5.9 -0.05 L7.05 1.1 L6.2 1.95 Z" fill="#9c9a98"/></svg></div>
<div class="vl" style="right:239px;top:516px;height:21px;line-height:21px">$0.00</div>
<div class="pw" style="left:1051px;top:523px"><svg class="pc" width="7" height="7" viewBox="0 0 7 7"><path d="M0.1 6.9 L0.75 5.1 L1.9 6.25 Z" fill="#a3a19f"/><path d="M0.75 5.1 L4.45 1.4 L5.6 2.55 L1.9 6.25 Z" fill="#72706e"/><path d="M5.05 0.8 L5.9 -0.05 L7.05 1.1 L6.2 1.95 Z" fill="#9c9a98"/></svg></div>
<div class="vl" style="right:34px;top:516px;height:21px;line-height:21px">$0.00</div>
<div class="pw" style="left:1256px;top:523px"><svg class="pc" width="7" height="7" viewBox="0 0 7 7"><path d="M0.1 6.9 L0.75 5.1 L1.9 6.25 Z" fill="#a3a19f"/><path d="M0.75 5.1 L4.45 1.4 L5.6 2.55 L1.9 6.25 Z" fill="#72706e"/><path d="M5.05 0.8 L5.9 -0.05 L7.05 1.1 L6.2 1.95 Z" fill="#9c9a98"/></svg></div>
<div class="ln" style="left:18px;top:560px;width:1251px"></div>
<div class="rn" style="left:32px;top:538px;height:22px;line-height:22px">7</div>
<div class="tx" style="left:48px;top:538px;height:22px;line-height:22px">Portfolio Lending</div>
<div class="vl" style="right:851px;top:538px;height:22px;line-height:22px">0</div>
<div class="pw" style="left:439px;top:545px"><svg class="pc" width="7" height="7" viewBox="0 0 7 7"><path d="M0.1 6.9 L0.75 5.1 L1.9 6.25 Z" fill="#a3a19f"/><path d="M0.75 5.1 L4.45 1.4 L5.6 2.55 L1.9 6.25 Z" fill="#72706e"/><path d="M5.05 0.8 L5.9 -0.05 L7.05 1.1 L6.2 1.95 Z" fill="#9c9a98"/></svg></div>
<div class="vl" style="right:647px;top:538px;height:22px;line-height:22px">0</div>
<div class="pw" style="left:643px;top:545px"><svg class="pc" width="7" height="7" viewBox="0 0 7 7"><path d="M0.1 6.9 L0.75 5.1 L1.9 6.25 Z" fill="#a3a19f"/><path d="M0.75 5.1 L4.45 1.4 L5.6 2.55 L1.9 6.25 Z" fill="#72706e"/><path d="M5.05 0.8 L5.9 -0.05 L7.05 1.1 L6.2 1.95 Z" fill="#9c9a98"/></svg></div>
<div class="vl" style="right:443px;top:538px;height:22px;line-height:22px">0</div>
<div class="pw" style="left:847px;top:545px"><svg class="pc" width="7" height="7" viewBox="0 0 7 7"><path d="M0.1 6.9 L0.75 5.1 L1.9 6.25 Z" fill="#a3a19f"/><path d="M0.75 5.1 L4.45 1.4 L5.6 2.55 L1.9 6.25 Z" fill="#72706e"/><path d="M5.05 0.8 L5.9 -0.05 L7.05 1.1 L6.2 1.95 Z" fill="#9c9a98"/></svg></div>
<div class="vl" style="right:239px;top:538px;height:22px;line-height:22px">$0.00</div>
<div class="pw" style="left:1051px;top:545px"><svg class="pc" width="7" height="7" viewBox="0 0 7 7"><path d="M0.1 6.9 L0.75 5.1 L1.9 6.25 Z" fill="#a3a19f"/><path d="M0.75 5.1 L4.45 1.4 L5.6 2.55 L1.9 6.25 Z" fill="#72706e"/><path d="M5.05 0.8 L5.9 -0.05 L7.05 1.1 L6.2 1.95 Z" fill="#9c9a98"/></svg></div>
<div class="vl" style="right:34px;top:538px;height:22px;line-height:22px">$0.00</div>
<div class="pw" style="left:1256px;top:545px"><svg class="pc" width="7" height="7" viewBox="0 0 7 7"><path d="M0.1 6.9 L0.75 5.1 L1.9 6.25 Z" fill="#a3a19f"/><path d="M0.75 5.1 L4.45 1.4 L5.6 2.55 L1.9 6.25 Z" fill="#72706e"/><path d="M5.05 0.8 L5.9 -0.05 L7.05 1.1 L6.2 1.95 Z" fill="#9c9a98"/></svg></div>
<div class="ln" style="left:18px;top:582px;width:1251px"></div>
<div class="rn" style="left:32px;top:561px;height:21px;line-height:21px">8</div>
<div class="tx" style="left:48px;top:561px;height:21px;line-height:21px">Land Contracts</div>
<div class="vl" style="right:851px;top:561px;height:21px;line-height:21px">0</div>
<div class="pw" style="left:439px;top:568px"><svg class="pc" width="7" height="7" viewBox="0 0 7 7"><path d="M0.1 6.9 L0.75 5.1 L1.9 6.25 Z" fill="#a3a19f"/><path d="M0.75 5.1 L4.45 1.4 L5.6 2.55 L1.9 6.25 Z" fill="#72706e"/><path d="M5.05 0.8 L5.9 -0.05 L7.05 1.1 L6.2 1.95 Z" fill="#9c9a98"/></svg></div>
<div class="vl" style="right:647px;top:561px;height:21px;line-height:21px">0</div>
<div class="pw" style="left:643px;top:568px"><svg class="pc" width="7" height="7" viewBox="0 0 7 7"><path d="M0.1 6.9 L0.75 5.1 L1.9 6.25 Z" fill="#a3a19f"/><path d="M0.75 5.1 L4.45 1.4 L5.6 2.55 L1.9 6.25 Z" fill="#72706e"/><path d="M5.05 0.8 L5.9 -0.05 L7.05 1.1 L6.2 1.95 Z" fill="#9c9a98"/></svg></div>
<div class="vl" style="right:443px;top:561px;height:21px;line-height:21px">0</div>
<div class="pw" style="left:847px;top:568px"><svg class="pc" width="7" height="7" viewBox="0 0 7 7"><path d="M0.1 6.9 L0.75 5.1 L1.9 6.25 Z" fill="#a3a19f"/><path d="M0.75 5.1 L4.45 1.4 L5.6 2.55 L1.9 6.25 Z" fill="#72706e"/><path d="M5.05 0.8 L5.9 -0.05 L7.05 1.1 L6.2 1.95 Z" fill="#9c9a98"/></svg></div>
<div class="vl" style="right:239px;top:561px;height:21px;line-height:21px">$0.00</div>
<div class="pw" style="left:1051px;top:568px"><svg class="pc" width="7" height="7" viewBox="0 0 7 7"><path d="M0.1 6.9 L0.75 5.1 L1.9 6.25 Z" fill="#a3a19f"/><path d="M0.75 5.1 L4.45 1.4 L5.6 2.55 L1.9 6.25 Z" fill="#72706e"/><path d="M5.05 0.8 L5.9 -0.05 L7.05 1.1 L6.2 1.95 Z" fill="#9c9a98"/></svg></div>
<div class="vl" style="right:34px;top:561px;height:21px;line-height:21px">$0.00</div>
<div class="pw" style="left:1256px;top:568px"><svg class="pc" width="7" height="7" viewBox="0 0 7 7"><path d="M0.1 6.9 L0.75 5.1 L1.9 6.25 Z" fill="#a3a19f"/><path d="M0.75 5.1 L4.45 1.4 L5.6 2.55 L1.9 6.25 Z" fill="#72706e"/><path d="M5.05 0.8 L5.9 -0.05 L7.05 1.1 L6.2 1.95 Z" fill="#9c9a98"/></svg></div>
<div class="ln" style="left:18px;top:605px;width:1251px"></div>
<div class="rn" style="left:32px;top:583px;height:22px;line-height:22px">9</div>
<div class="tx" style="left:48px;top:583px;height:22px;line-height:22px">Other</div>
<div class="vl" style="right:851px;top:583px;height:22px;line-height:22px">0</div>
<div class="pw" style="left:439px;top:590px"><svg class="pc" width="7" height="7" viewBox="0 0 7 7"><path d="M0.1 6.9 L0.75 5.1 L1.9 6.25 Z" fill="#a3a19f"/><path d="M0.75 5.1 L4.45 1.4 L5.6 2.55 L1.9 6.25 Z" fill="#72706e"/><path d="M5.05 0.8 L5.9 -0.05 L7.05 1.1 L6.2 1.95 Z" fill="#9c9a98"/></svg></div>
<div class="vl" style="right:647px;top:583px;height:22px;line-height:22px">0</div>
<div class="pw" style="left:643px;top:590px"><svg class="pc" width="7" height="7" viewBox="0 0 7 7"><path d="M0.1 6.9 L0.75 5.1 L1.9 6.25 Z" fill="#a3a19f"/><path d="M0.75 5.1 L4.45 1.4 L5.6 2.55 L1.9 6.25 Z" fill="#72706e"/><path d="M5.05 0.8 L5.9 -0.05 L7.05 1.1 L6.2 1.95 Z" fill="#9c9a98"/></svg></div>
<div class="vl" style="right:443px;top:583px;height:22px;line-height:22px">0</div>
<div class="pw" style="left:847px;top:590px"><svg class="pc" width="7" height="7" viewBox="0 0 7 7"><path d="M0.1 6.9 L0.75 5.1 L1.9 6.25 Z" fill="#a3a19f"/><path d="M0.75 5.1 L4.45 1.4 L5.6 2.55 L1.9 6.25 Z" fill="#72706e"/><path d="M5.05 0.8 L5.9 -0.05 L7.05 1.1 L6.2 1.95 Z" fill="#9c9a98"/></svg></div>
<div class="vl" style="right:239px;top:583px;height:22px;line-height:22px">$0.00</div>
<div class="pw" style="left:1051px;top:590px"><svg class="pc" width="7" height="7" viewBox="0 0 7 7"><path d="M0.1 6.9 L0.75 5.1 L1.9 6.25 Z" fill="#a3a19f"/><path d="M0.75 5.1 L4.45 1.4 L5.6 2.55 L1.9 6.25 Z" fill="#72706e"/><path d="M5.05 0.8 L5.9 -0.05 L7.05 1.1 L6.2 1.95 Z" fill="#9c9a98"/></svg></div>
<div class="vl" style="right:34px;top:583px;height:22px;line-height:22px">$0.00</div>
<div class="pw" style="left:1256px;top:590px"><svg class="pc" width="7" height="7" viewBox="0 0 7 7"><path d="M0.1 6.9 L0.75 5.1 L1.9 6.25 Z" fill="#a3a19f"/><path d="M0.75 5.1 L4.45 1.4 L5.6 2.55 L1.9 6.25 Z" fill="#72706e"/><path d="M5.05 0.8 L5.9 -0.05 L7.05 1.1 L6.2 1.95 Z" fill="#9c9a98"/></svg></div>
<div class="ln" style="left:18px;top:627px;width:1251px"></div>
<div class="rn" style="left:32px;top:606px;height:21px;line-height:21px">10</div>
<div class="tx" style="left:48px;top:606px;height:21px;line-height:21px">N/A</div>
<div class="vl" style="right:851px;top:606px;height:21px;line-height:21px">0</div>
<div class="pw" style="left:439px;top:613px"><svg class="pc" width="7" height="7" viewBox="0 0 7 7"><path d="M0.1 6.9 L0.75 5.1 L1.9 6.25 Z" fill="#a3a19f"/><path d="M0.75 5.1 L4.45 1.4 L5.6 2.55 L1.9 6.25 Z" fill="#72706e"/><path d="M5.05 0.8 L5.9 -0.05 L7.05 1.1 L6.2 1.95 Z" fill="#9c9a98"/></svg></div>
<div class="vl" style="right:647px;top:606px;height:21px;line-height:21px">0</div>
<div class="pw" style="left:643px;top:613px"><svg class="pc" width="7" height="7" viewBox="0 0 7 7"><path d="M0.1 6.9 L0.75 5.1 L1.9 6.25 Z" fill="#a3a19f"/><path d="M0.75 5.1 L4.45 1.4 L5.6 2.55 L1.9 6.25 Z" fill="#72706e"/><path d="M5.05 0.8 L5.9 -0.05 L7.05 1.1 L6.2 1.95 Z" fill="#9c9a98"/></svg></div>
<div class="vl" style="right:443px;top:606px;height:21px;line-height:21px">0</div>
<div class="pw" style="left:847px;top:613px"><svg class="pc" width="7" height="7" viewBox="0 0 7 7"><path d="M0.1 6.9 L0.75 5.1 L1.9 6.25 Z" fill="#a3a19f"/><path d="M0.75 5.1 L4.45 1.4 L5.6 2.55 L1.9 6.25 Z" fill="#72706e"/><path d="M5.05 0.8 L5.9 -0.05 L7.05 1.1 L6.2 1.95 Z" fill="#9c9a98"/></svg></div>
<div class="vl" style="right:239px;top:606px;height:21px;line-height:21px">$0.00</div>
<div class="pw" style="left:1051px;top:613px"><svg class="pc" width="7" height="7" viewBox="0 0 7 7"><path d="M0.1 6.9 L0.75 5.1 L1.9 6.25 Z" fill="#a3a19f"/><path d="M0.75 5.1 L4.45 1.4 L5.6 2.55 L1.9 6.25 Z" fill="#72706e"/><path d="M5.05 0.8 L5.9 -0.05 L7.05 1.1 L6.2 1.95 Z" fill="#9c9a98"/></svg></div>
<div class="vl" style="right:34px;top:606px;height:21px;line-height:21px">$0.00</div>
<div class="pw" style="left:1256px;top:613px"><svg class="pc" width="7" height="7" viewBox="0 0 7 7"><path d="M0.1 6.9 L0.75 5.1 L1.9 6.25 Z" fill="#a3a19f"/><path d="M0.75 5.1 L4.45 1.4 L5.6 2.55 L1.9 6.25 Z" fill="#72706e"/><path d="M5.05 0.8 L5.9 -0.05 L7.05 1.1 L6.2 1.95 Z" fill="#9c9a98"/></svg></div>
<div class="ln" style="left:18px;top:650px;width:1251px"></div>
<div class="rn" style="left:32px;top:628px;height:22px;line-height:22px">11</div>
<div class="tx" style="left:48px;top:628px;height:22px;line-height:22px">Data Not Collected</div>
<div class="vl" style="right:851px;top:628px;height:22px;line-height:22px">0</div>
<div class="pw" style="left:439px;top:635px"><svg class="pc" width="7" height="7" viewBox="0 0 7 7"><path d="M0.1 6.9 L0.75 5.1 L1.9 6.25 Z" fill="#a3a19f"/><path d="M0.75 5.1 L4.45 1.4 L5.6 2.55 L1.9 6.25 Z" fill="#72706e"/><path d="M5.05 0.8 L5.9 -0.05 L7.05 1.1 L6.2 1.95 Z" fill="#9c9a98"/></svg></div>
<div class="vl" style="right:647px;top:628px;height:22px;line-height:22px">0</div>
<div class="pw" style="left:643px;top:635px"><svg class="pc" width="7" height="7" viewBox="0 0 7 7"><path d="M0.1 6.9 L0.75 5.1 L1.9 6.25 Z" fill="#a3a19f"/><path d="M0.75 5.1 L4.45 1.4 L5.6 2.55 L1.9 6.25 Z" fill="#72706e"/><path d="M5.05 0.8 L5.9 -0.05 L7.05 1.1 L6.2 1.95 Z" fill="#9c9a98"/></svg></div>
<div class="vl" style="right:443px;top:628px;height:22px;line-height:22px">0</div>
<div class="pw" style="left:847px;top:635px"><svg class="pc" width="7" height="7" viewBox="0 0 7 7"><path d="M0.1 6.9 L0.75 5.1 L1.9 6.25 Z" fill="#a3a19f"/><path d="M0.75 5.1 L4.45 1.4 L5.6 2.55 L1.9 6.25 Z" fill="#72706e"/><path d="M5.05 0.8 L5.9 -0.05 L7.05 1.1 L6.2 1.95 Z" fill="#9c9a98"/></svg></div>
<div class="vl" style="right:239px;top:628px;height:22px;line-height:22px">$0.00</div>
<div class="pw" style="left:1051px;top:635px"><svg class="pc" width="7" height="7" viewBox="0 0 7 7"><path d="M0.1 6.9 L0.75 5.1 L1.9 6.25 Z" fill="#a3a19f"/><path d="M0.75 5.1 L4.45 1.4 L5.6 2.55 L1.9 6.25 Z" fill="#72706e"/><path d="M5.05 0.8 L5.9 -0.05 L7.05 1.1 L6.2 1.95 Z" fill="#9c9a98"/></svg></div>
<div class="vl" style="right:34px;top:628px;height:22px;line-height:22px">$0.00</div>
<div class="pw" style="left:1256px;top:635px"><svg class="pc" width="7" height="7" viewBox="0 0 7 7"><path d="M0.1 6.9 L0.75 5.1 L1.9 6.25 Z" fill="#a3a19f"/><path d="M0.75 5.1 L4.45 1.4 L5.6 2.55 L1.9 6.25 Z" fill="#72706e"/><path d="M5.05 0.8 L5.9 -0.05 L7.05 1.1 L6.2 1.95 Z" fill="#9c9a98"/></svg></div>
<div class="ln" style="left:18px;top:672px;width:1251px"></div>
<div class="rn" style="left:32px;top:651px;height:21px;line-height:21px">12</div>
<div style="position:absolute;left:44px;top:651px;width:1225px;height:21px;background:#093b6d"></div>
<div class="tt" style="left:48px;top:651px;height:21px;line-height:21px">Totals</div>
<div class="tv" style="right:836px;top:651px;height:21px;line-height:21px">0</div>
<div class="tv" style="right:632px;top:651px;height:21px;line-height:21px">0</div>
<div class="tv" style="right:428px;top:651px;height:21px;line-height:21px">0</div>
<div class="tv" style="right:224px;top:651px;height:21px;line-height:21px">$0.00</div>
<div class="tv" style="right:19px;top:651px;height:21px;line-height:21px">$0.00</div>
<div class="ln" style="left:18px;top:695px;width:1251px"></div>
<div class="rn" style="left:32px;top:673px;height:22px;line-height:22px">13</div>
<div style="position:absolute;left:44px;top:673px;width:1225px;height:22px;background:#4cb3e9"></div>
<div class="tt" style="left:48px;top:673px;height:22px;line-height:22px">Programmatic Totals*</div>
<div class="pv" style="right:224px;top:673px;height:22px;line-height:22px">$0.00</div>
<div class="pv" style="right:19px;top:673px;height:22px;line-height:22px">$0.00</div>
<div class="note" style="left:18px;top:698px">*The Assistance Data totals reported in the Mortgages table must be consistent with the data you entered in the Budget Reporting and Programmatic Information sections. The target values are shown above to help HAF participants provide consistent data.</div>
</body></html>
